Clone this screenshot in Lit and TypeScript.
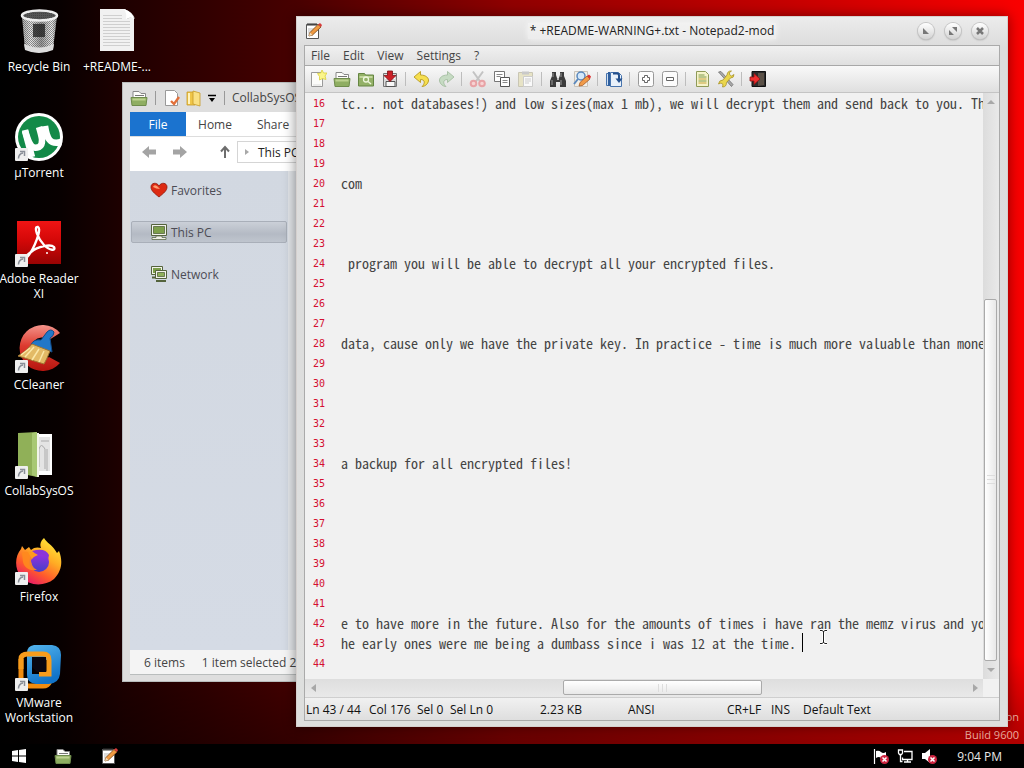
import { LitElement, html, css, svg, TemplateResult } from "lit";
import { customElement, property } from "lit/decorators.js";

type Art = TemplateResult;
const icon = (size: number, box: number, body: unknown): Art =>
  html`<svg width=${size} height=${size} viewBox="0 0 ${box} ${box}" aria-hidden="true">${body}</svg>`;

/* ---------- desktop artwork (48 unit grid) ---------- */
const bin = icon(48, 48, svg`
  <defs>
    <linearGradient id="bg"><stop offset="0" stop-color="#aaa"/><stop offset=".25" stop-color="#e8e8e8"/><stop offset=".55" stop-color="#999"/><stop offset=".85" stop-color="#eee"/><stop offset="1" stop-color="#999"/></linearGradient>
    <pattern id="mesh" width="2" height="2" patternUnits="userSpaceOnUse"><rect width="1" height="1" fill="#444"/><rect x="1" y="1" width="1" height="1" fill="#555"/></pattern>
  </defs>
  <path d="M7 9 L10 42 Q24 49 38 42 L42 9Z" fill="url(#bg)"/>
  <path d="M7 9 L10 42 Q24 49 38 42 L42 9Z" fill="url(#mesh)" opacity=".6"/>
  <rect x="18" y="17" width="12" height="13" fill="#1c1c1c" opacity=".75"/>
  <path d="M9 37 Q24 44 39 37 L38 43 Q24 49 10 43Z" fill="#ddd"/>
  <ellipse cx="24.500" cy="8.500" rx="17.500" ry="5" fill="#555" stroke="#eee" stroke-width="2.500"/>
  <ellipse cx="24.500" cy="8.500" rx="15" ry="3.500" fill="url(#mesh)"/>`);
const paper = icon(48, 48, svg`
  <path d="M7 2 h25 l9 9 v33 h-34z" fill="#f1f1f1"/>
  <path d="M31 2 q5 3 3 10 q5 -3 8 0 q-2 -7 -11 -10z" fill="#bbb"/>
  <path d="M31 2 q3 4 2 10 q5 -3 8 0 q-1 -7 -10 -10z" fill="#fff"/>
  ${[8, 11, 14, 17, 20, 23, 26, 29, 32, 35, 38].map(y => svg`<path d="M10 ${y + .5} H${y < 13 ? 29 : 37}" stroke="#cfcfcf"/>`)}`);
const torrent = icon(50, 50, svg`
  <circle cx="25" cy="25" r="24" fill="#fff"/><circle cx="25" cy="25" r="21" fill="#138a48"/>
  <path d="M11 19 L18 45" stroke="#fff" stroke-width="6.500"/>
  <path d="M11 18 C15 33 18 38 25 35 C30 32 28 25 25 15 M31 14 C33 27 36 33 47 30" stroke="#fff" stroke-width="6.500" fill="none"/>`);
const adobe = icon(46, 46, svg`
  <defs><linearGradient id="ad" x2="0" y2="1"><stop offset="0" stop-color="#f01414"/><stop offset=".45" stop-color="#d40808"/><stop offset="1" stop-color="#980303"/></linearGradient></defs>
  <rect x="1" y="1" width="44" height="43" fill="url(#ad)"/>
  <path d="M22 7 C17 6 22 19 28 25 C34 31 40 31 38 27 C35 24 22 26 15 32 C7 38 9 40 12 36 C18 29 26 9 22 7Z" fill="none" stroke="#fff" stroke-width="2.400"/>
  <circle cx="31" cy="33" r="1" fill="#fff"/>`);
const ccleaner = icon(48, 48, svg`
  <defs><linearGradient id="cc" x2="0" y2="1"><stop offset="0" stop-color="#f4938a"/><stop offset=".45" stop-color="#dd3b2f"/><stop offset="1" stop-color="#b5150f"/></linearGradient></defs>
  <path d="M45 8 A23 23 0 1 0 45 38 L34 32 A11 11 0 1 1 34 15Z" fill="url(#cc)"/>
  <path d="M32 7 Q36 3 39 7 Q39 11 35 13 L37 27 L16 20 Q18 14 26 15Z" fill="#2277c8" stroke="#124b87"/>
  <path d="M17 19 L35 26 Q32 34 29 39 L3 31 Q12 26 17 19Z" fill="#e3ba66" stroke="#9e7431"/>
  <path d="M19 22 L10 32 M24 24 L17 35 M29 26 L24 37 M15 23 L6 30" stroke="#fbe7a8" stroke-width="1.500"/>`);
const folderDoc = icon(48, 48, svg`
  <path d="M20 3 H37 V44 H20Z" fill="#fff"/><path d="M23 6h12v34h-12z" fill="#e4e4e4"/>
  <path d="M24 36 V18 q2 -7 6 0 v20 M26 10h8M32 18v22" stroke="#aaa" fill="none"/>
  <path d="M3 2 L22 1 V46 L3 42Z" fill="#90b058"/><path d="M17 2 l5 -1 v45 l-5 -2z" fill="#a8c873"/>
  <path d="M22 2 h2 v44 h-2z" fill="#f2f5e9"/>`);
const firefox = icon(48, 48, svg`
  <defs><linearGradient id="ff" x1=".85" y1="0" x2=".25" y2="1"><stop offset="0" stop-color="#fff03c"/><stop offset=".4" stop-color="#ffab24"/><stop offset=".7" stop-color="#ff5a2c"/><stop offset="1" stop-color="#e5146c"/></linearGradient>
  <linearGradient id="fp" x2="0" y2="1"><stop offset="0" stop-color="#9a2fe0"/><stop offset="1" stop-color="#4a3fc8"/></linearGradient></defs>
  <path d="M29 1 C32 6 37 8 40 13 L42 16 L44 14 C48 24 47 34 39 42 C29 50 14 49 6 40 C-1 31 0 19 6 12 L7 9 L10 13 L14 10 L16 13 C19 10 23 10 26 11 C24 6 27 3 29 1Z" fill="url(#ff)"/>
  <circle cx="24" cy="25" r="10" fill="url(#fp)"/>
  <path d="M7 16 C12 13 16 16 23 17 C23 20 18 21 16 23 C16 28 22 30 27 29 C22 36 10 34 8 25Z" fill="#ff8a1e" opacity=".9"/>
  <circle cx="25" cy="25" r="8.500" fill="url(#fp)"/>
  <path d="M17 14 Q30 10 34 18 L33 23 Q30 16 22 18Z" fill="#8a35d8"/>
  <path d="M13 15 Q19 15 23 18 Q18 20 17 22Z" fill="#ff9a1e"/>`);
const vmware = icon(48, 48, svg`
  <defs><linearGradient id="vb" x2=".4" y2="1"><stop offset="0" stop-color="#55b6ee"/><stop offset="1" stop-color="#1173c8"/></linearGradient></defs>
  <path d="M6 16 V36 Q6 43 14 43 H28 Q33 43 35 38" fill="none" stroke="#f08c10" stroke-width="5"/>
  <path d="M19 2 H37 Q46 3 46 12 L45 31 Q44 40 34 41 H21 Q12 40 12 32 V10 Q12 3 19 2Z M17 17 V31 H32 V17Z" fill="url(#vb)" fill-rule="evenodd"/>
  <path d="M6 26 V16 Q6 11 13 11 H28 Q34 11 34 17 V31 H24" fill="none" stroke="#f79c1c" stroke-width="5"/>
  <path d="M17 14h14v15h-9l-5-5z" fill="#0a0710"/>`);

/* ---------- 16 unit glyphs ---------- */
const openFolder = icon(18, 18, svg`
  <path d="M3 9 V2.500 H9 L11 4.500 H15.500 V9Z" fill="#fdfdfa" stroke="#888"/>
  <path d="M5 6.500 h9" stroke="#777"/>
  <path d="M1 8.500 H17 L16 16.500 H2Z" fill="#8fae62" stroke="#6f8c4c"/><path d="M2.500 9.500h13v2h-13z" fill="#bcd28f"/>`);
const browse = icon(18, 18, svg`
  <path d="M1.500 3.500 h6 l1 1.500 h8 v11 h-15z" fill="#93b167" stroke="#658542"/><path d="M2.500 6h13v2h-13z" fill="#c3d79c"/>
  <circle cx="9" cy="9.500" r="2.500" fill="none" stroke="#eef6dc" stroke-width="1.300"/><path d="M11 11.500l3 2.500" stroke="#eef6dc" stroke-width="1.500"/>`);
const pad = icon(18, 18, svg`
  <path d="M2.500 2.500 h12 v14 h-12z" fill="#fff" stroke="#555"/><path d="M4 1v3M6 1v3M8 1v3M10 1v3M12 1v3" stroke="#333" stroke-width="1"/>
  <path d="M4 7h8M4 9h7M4 11h6M4 13h5" stroke="#aaa" stroke-width=".8"/>
  <path d="M5 14 L6 10.500 L14 2.500 L17 5 L8.500 13Z" fill="#f09a42" stroke="#87531f" stroke-width=".9"/><path d="M14 2.500 l3 2.500 1-2 -2-2z" fill="#d83a3a"/><path d="M5 14 L6 10.500 L8.500 13Z" fill="#f4dcb8"/>`);
const newFile = icon(18, 18, svg`
  <path d="M2.500 2.500 h11 v14 h-11z" fill="#fcfcfa" stroke="#9a9a9a"/><path d="M4 15h8" stroke="#ddd"/>
  <path d="M13 0 l1.500 3 3.500 0 -2 3 1 3.500 -3.500 -1 -3 1.500 0 -3.500 -2 -3 3.300 -.5z" fill="#fbf58b" stroke="#d9cf3a" stroke-width=".8"/>`);
const save = icon(18, 18, svg`
  <path d="M2.500 3.500 h13 v13 h-13z" fill="#dcdcdc" stroke="#777"/><path d="M5 11.500h9v5h-9z" fill="#f8f8f8" stroke="#555"/><path d="M4 5h2v4h-2zM12 5h2v4h-2z" fill="#fff"/>
  <path d="M6.500 1 h5 v4.500 h3.500 l-6 6 -6 -6 h3.500z" fill="#cc2027" stroke="#7e1015" stroke-width=".8"/>`);
const undo = icon(18, 18, svg`
  <path d="M1 7 L7.500 1.500 V5 C13 5 16 8 15.500 11 C15 14 12 16.500 9 16.500 C12 14 12.500 9.500 7.500 9.500 V12.500Z" fill="#f6df4f" stroke="#b79a24" stroke-width=".9"/>`);
const redo = icon(18, 18, svg`
  <path d="M17 7 L10.500 1.500 V5 C5 5 2 8 2.500 11 C3 14 6 16.500 9 16.500 C6 14 5.500 9.500 10.500 9.500 V12.500Z" fill="#c6dbc3" stroke="#a5bda2" stroke-width=".9"/>`);
const cut = icon(18, 18, svg`
  <path d="M4 1.500 L11.500 12 M14 1.500 L6.500 12" stroke="#c3c3c3" stroke-width="2"/>
  <circle cx="4.500" cy="13.500" r="2.800" fill="#f7d3d3" stroke="#e8a3a6" stroke-width="2"/><circle cx="13" cy="13.500" r="2.800" fill="#f7d3d3" stroke="#e8a3a6" stroke-width="2"/>`);
const copy = icon(18, 18, svg`
  <path d="M1.500 1.500 h10 v10 h-10z" fill="#fff" stroke="#777"/><path d="M3.500 4.500h6M3.500 6.500h4" stroke="#888"/>
  <path d="M7.500 7.500 h9 v9 h-9z" fill="#fff" stroke="#555"/><path d="M9.500 10.500h5M9.500 12.500h5" stroke="#888"/>`);
const paste = icon(18, 18, svg`
  <path d="M1.500 2.500 h14 v14 h-14z" fill="#e7e3c6" stroke="#c9c6b4"/><path d="M5 1.500h7v3h-7z" fill="#c9c9c9"/><path d="M6.500 6.500h9v10h-9z" fill="#fafafa" stroke="#ccc"/><path d="M8 9h6M8 11h6M8 13h4" stroke="#ccc"/>`);
const find = icon(18, 18, svg`
  <path d="M3 2h4v3l1 3h2l1-3v-3h4v4l2 5v6h-6v-5h-4v5h-6v-6l2-5z" fill="#3c3c3c"/><path d="M4 3v4M12 3v4M3 10v5M12 10v5" stroke="#999"/><path d="M8 8h2v2h-2z" fill="#bbb"/>`);
const replace = icon(18, 18, svg`
  <path d="M1.500 1.500h13v15h-13z" fill="#f1efe9" stroke="#c9c2b8"/><circle cx="8" cy="6" r="4" fill="#d4e8fa" stroke="#5a88bd" stroke-width="1.500"/><path d="M5 9 l-4 5" stroke="#5a88bd" stroke-width="2"/>
  <path d="M6 16 l1-3.500 7-6.500 3 3 -7.500 6.500z" fill="#f19a48" stroke="#a55c28" stroke-width=".8"/><path d="M14 6l2-1.500 2 2-1 2.500z" fill="#d33"/>`);
const wrap = icon(18, 18, svg`
  <path d="M1.500 3.500h4v12h-4z" fill="#cfe0f3" stroke="#4673ad"/><path d="M5.500 2.500h8l3 3v11h-11z" fill="#e9f1fa" stroke="#4673ad"/>
  <path d="M4 2v14" stroke="#2f5f9e" stroke-width="2"/><path d="M8 3.500h4q2 0 2 2v4" stroke="#234f8c" stroke-width="2" fill="none"/><path d="M10.500 8.500h7l-3.500 4.500z" fill="#234f8c"/>`);
const zoomBox = (plus: boolean) => icon(18, 18, svg`
  <rect x="1.500" y="1.500" width="15" height="15" rx="2" fill="#fcfcfc" stroke="#999"/>
  ${plus ? svg`<path d="M7.500 5.500h3v2h2v3h-2v2h-3v-2h-2v-3h2z" fill="#fff" stroke="#666"/>` : svg`<path d="M5.500 7.500h7v3h-7z" fill="#fff" stroke="#666"/>`}`);
const scheme = icon(18, 18, svg`
  <path d="M3.500 1.500h9l3 3v12h-12z" fill="#f5f3c9" stroke="#8f9a58"/><path d="M5.500 5h6M5.500 7h8M5.500 11h8" stroke="#7f9a4c"/><path d="M5.500 9h8M5.500 13h8" stroke="#c8a23c"/>`);
const tools = icon(18, 18, svg`
  <path d="M1.500 2 L4 1.500 L16 14.500 L14.500 16.500 Z" fill="#a9a9a9" stroke="#666" stroke-width=".7"/>
  <path d="M17 4.500 l-2.500 1.500 -2 -1.500 0 -2 2 -1.500 q-4 -.5 -4.500 4 l-4 5 q-4 0 -4.500 4 l2.500 -1 2 1.500 -.5 2.500 q4 0 4 -4.500 l4 -4.500 q3.500 0 3.500 -3.500z" fill="#ead64c" stroke="#a08a1f" stroke-width=".7"/>`);
const exit = icon(18, 18, svg`
  <path d="M3 1.500h13.500v15h-13.500z" fill="#2c2c2c" stroke="#111"/><path d="M9 3h6v12l-6 1z" fill="#5b5147"/>
  <path d="M1 7h4v-3.500l6 5.500-6 5.500v-3.500h-4z" fill="#ee2f2f" stroke="#8b1010" stroke-width=".8"/>`);
const pageCheck = icon(18, 18, svg`
  <path d="M2.500 1.500h9l3 3v12h-12z" fill="#fff" stroke="#999"/><path d="M8 12 l3 3 5-7" stroke="#e2703a" stroke-width="2.400" fill="none"/>`);
const yellowFolder = icon(18, 18, svg`
  <path d="M2 3h8v13h-8z" fill="#f0c649" stroke="#c79a26" stroke-width=".8"/><path d="M8 2l7 2v13l-7-2z" fill="#fae083" stroke="#c79a26" stroke-width=".8"/><path d="M4 4v11" stroke="#fff3bd" stroke-width="2"/>`);
const heart = icon(18, 18, svg`
  <path d="M9 16 C4 12 1 9.500 1 6 C1 1.500 7 1 9 5 C11 1 17 1.500 17 6 C17 9.500 14 12 9 16Z" fill="#dd2a12" stroke="#8d1508" stroke-width=".8"/><path d="M3 6 Q4 3 7 5 L10 8 Q6 8 3 6Z" fill="#ff9c70"/>`);
const pc = icon(18, 18, svg`
  <path d="M1.500 1.500h15v11h-15z" fill="#f2f2ea" stroke="#54633c"/><path d="M3.500 3.500h11v7h-11z" fill="#7d9f4a" stroke="#54633c" stroke-width=".8"/>
  <path d="M6 13h6v1.500h4v2h-14v-2h4z" fill="#f0f0e8" stroke="#5d6b49" stroke-width=".8"/>`);
const network = icon(18, 18, svg`
  <path d="M1.500 1.500h11v8h-11z" fill="#f2f2ea" stroke="#54633c"/><path d="M3 3h8v5h-8z" fill="#7d9f4a"/><path d="M2 12.500h5" stroke="#54633c" stroke-width="2"/>
  <path d="M5.500 5.500h11v8h-11z" fill="#f2f2ea" stroke="#54633c"/><path d="M7.500 7.500h7v4h-7z" fill="#8fb05a" stroke="#54633c" stroke-width=".8"/><path d="M6 16h10" stroke="#54633c" stroke-width="2"/>`);
const navArrow = (right: boolean) => icon(16, 16, right
  ? svg`<path d="M1 5.500h7v-3.500l7 6-7 6v-3.500h-7z" fill="#a4a4a4"/>`
  : svg`<path d="M15 5.500h-7v-3.500l-7 6 7 6v-3.500h7z" fill="#a4a4a4"/>`);
const upArrow = icon(14, 14, svg`<path d="M7 13V3M3 6.500L7 2l4 4.500" fill="none" stroke="#6d6d6d" stroke-width="2"/>`);
const windows = icon(14, 14, svg`<path d="M0 2l6-1v5.500h-6zM7 1l7-1v6.500h-7zM0 7.500h6v5.500l-6-1zM7 7.500h7v6.500l-7-1z" fill="#fff"/>`);
const badX = svg`<circle cx="11.500" cy="11.500" r="4.500" fill="#cf2440"/><path d="M9.500 9.500l4 4m0-4l-4 4" stroke="#fff" stroke-width="1.500"/>`;
const flag = icon(16, 16, svg`<path d="M1.500 1v15" stroke="#fff" stroke-width="1.200"/><path d="M3 3q3-1 5 1t5 0v7q-3 1-5-1t-5 0z" fill="#fff"/>${badX}`);
const lan = icon(16, 16, svg`<path d="M7 3.500h8v8h-9.500v-2" fill="none" stroke="#fff" stroke-width="1.300"/><path d="M7 14h7M10.500 12v2M3.500 6v7.500h2" stroke="#fff" stroke-width="1.300" fill="none"/><path d="M1.500 2h4v3l-1 1.500h-2l-1-1.500z" fill="none" stroke="#fff" stroke-width="1.300"/>`);
const speaker = icon(16, 16, svg`<path d="M1 5h3l5-4v14l-5-4h-3z" fill="#fff"/>${badX}`);
const shortcut = icon(13, 13, svg`<rect width="13" height="13" rx="1" fill="#efefef"/><path d="M3.500 10.500Q3.500 6 8 5M5 3.500h4.500v4.500" fill="none" stroke="#8a8f98" stroke-width="1.500"/>`);
const tri = (d: string) => html`<svg width="8" height="8" viewBox="0 0 8 8" aria-hidden="true"><path d=${d} fill="#a8a8a8"/></svg>`;

@customElement("desktop-item")
class DesktopItem extends LitElement {
  @property() label = "";
  @property({ attribute: false }) art: Art | null = null;
  @property({ type: Boolean }) link = false;
  static styles = css`
    :host { display: block; }
    button { all: unset; box-sizing: border-box; display: flex; flex-direction: column; align-items: center; width: 100%; }
    .art { position: relative; display: flex; align-items: center; justify-content: center; width: 50px; height: 50px; }
    .badge { position: absolute; left: 1px; bottom: 1px; display: flex; }
    .text { margin: 3px -4px 0; font-size: 12px; line-height: 15px; text-align: center; color: #fff; text-shadow: 0 1px 2px #000; }
  `;
  render() {
    return html`<button><span class="art">${this.art}${this.link ? html`<span class="badge">${shortcut}</span>` : ""}</span><span class="text">${this.label}</span></button>`;
  }
}

@customElement("file-window")
class FileWindow extends LitElement {
  static styles = css`
    :host { display: flex; flex-direction: column; box-sizing: border-box; padding: 0 7px 6px; background: #dedede; border: 1px solid #b9bdbd; font-size: 12px; color: #444; }
    button { all: unset; display: flex; }
    .title { display: flex; align-items: center; height: 29px; gap: 4px; }
    .bar { width: 1px; height: 14px; margin: 0 3px; background: #999; }
    .tabs { display: flex; height: 24px; background: #fff; border-bottom: 1px solid #ddd; }
    .tabs button { justify-content: center; align-items: center; width: 58px; white-space: nowrap; }
    .tabs .file { background: #1b73cf; color: #fff; width: 56px; }
    .nav { display: flex; align-items: center; height: 30px; padding: 0 0 4px 11px; background: #fff; }
    .nav button { margin-right: 15px; }
    .nav .up { margin: 0 5px 0 15px; }
    .path { display: flex; align-items: center; flex: 1; height: 20px; gap: 7px; padding-left: 5px; border: 1px solid #d5d5d5; white-space: nowrap; color: #222; }
    .body { display: flex; flex: 1; background: #e3e6ea; min-height: 0; }
    .tree { width: 158px; padding-top: 8px; background: linear-gradient(#d2d8e1, #d5dbe5); display: flex; flex-direction: column; gap: 20px; }
    .tree button { align-items: center; gap: 3px; height: 20px; padding-left: 18px; margin: 0 1px; border: 1px solid transparent; color: #4c4c55; }
    .tree .on { border-color: #a9afb9; border-radius: 2px; background: linear-gradient(#cbd0d8, #b4bac4 60%, #bfc5ce); }
    .status { display: flex; align-items: center; gap: 17px; height: 24px; padding-left: 14px; background: #f4f4f4; border-bottom: 1px solid #b9bdbd; white-space: nowrap; }
    .pair { display: flex; gap: 3px; }
  `;
  render() {
    return html`
      <div class="title">${openFolder}<i class="bar"></i>${pageCheck}${yellowFolder}
        ${icon(10, 10, svg`<path d="M1 2.500h8" stroke="#000" stroke-width="1.500"/><path d="M2 5h6l-3 4z"/>`)}
        <i class="bar"></i><span>CollabSysOS</span></div>
      <div class="tabs"><button class="file">File</button><button>Home</button><button>Share</button></div>
      <div class="nav"><button aria-label="Back">${navArrow(false)}</button><button aria-label="Forward">${navArrow(true)}</button>
        <button class="up" aria-label="Up">${upArrow}</button>
        <div class="path">${tri("M2 1l4 3-4 3z")}<span>This PC</span></div></div>
      <div class="body"><div class="tree">
        <button>${heart}Favorites</button><button class="on">${pc}This PC</button><button>${network}Network</button></div></div>
      <div class="status"><span>6 items</span><span class="pair"><span>1 item selected</span><span>2.</span></span></div>`;
  }
}

const TOOLS: [string, Art][][] = [
  [["New", newFile], ["Open", openFolder], ["Browse", browse], ["Save", save]],
  [["Undo", undo], ["Redo", redo]],
  [["Cut", cut], ["Copy", copy], ["Paste", paste]],
  [["Find", find], ["Replace", replace]],
  [["Word wrap", wrap]],
  [["Zoom in", zoomBox(true)], ["Zoom out", zoomBox(false)]],
  [["Scheme", scheme], ["Customize", tools]],
  [["Exit", exit]],
];
const TEXT: Record<number, string> = {
  16: "tc... not databases!) and low sizes(max 1 mb), we will decrypt them and send back to you. Th",
  20: "com",
  24: " program you will be able to decrypt all your encrypted files.",
  28: "data, cause only we have the private key. In practice - time is much more valuable than money",
  34: "a backup for all encrypted files!",
  42: "e to have more in the future. Also for the amounts of times i have ran the memz virus and you",
  43: "he early ones were me being a dumbass since i was 12 at the time. ",
};
const LINES = Array.from({ length: 29 }, (_, i) => i + 16);

@customElement("note-window")
class NoteWindow extends LitElement {
  static styles = css`
    :host { display: flex; flex-direction: column; box-sizing: border-box; padding: 0 7px 5px; background: linear-gradient(#ececec, #dcdcdc 30px, #dedfde); border: 1px solid #d5d0ce; box-shadow: 0 0 12px rgba(0, 0, 0, 0.45); font-size: 12px; color: #444; }
    button { all: unset; display: flex; align-items: center; justify-content: center; }
    .title { display: grid; grid-template-columns: 1fr auto 1fr; align-items: center; height: 28px; }
    .name { color: #222; padding: 0 2px; background: rgba(255, 255, 255, 0.4); box-shadow: 0 0 6px rgba(255, 255, 255, 0.7); line-height: 16px; }
    .ctl { display: flex; justify-content: flex-end; gap: 11px; padding-right: 12px; }
    .ctl button { width: 16px; height: 16px; border-radius: 50%; background: linear-gradient(#fff, #d3d3d3); box-shadow: 0 0 0 1px #c4c4c4, 0 1px 2px #999; }
    .frame { display: flex; flex-direction: column; flex: 1; min-height: 0; border: 1px solid #aaa; }
    .menu { display: flex; align-items: center; gap: 13px; height: 19px; padding: 0 6px; background: linear-gradient(#f0f0f0, #e0e0e0); border-bottom: 1px solid #a8a8a8; }
    .tools { display: flex; align-items: center; height: 26px; padding-left: 1px; background: linear-gradient(#f9f9f9, #dfdfdf); border-bottom: 1px solid #c4c4c4; }
    .group { display: flex; }
    .group + .group::before { content: ""; width: 1px; height: 14px; margin: 5px 4px 0 3px; background: #bdbdbd; }
    .group button { width: 24px; height: 24px; }
    .edit { display: grid; grid-template-columns: 1fr 16px; grid-template-rows: 1fr 18px; flex: 1; min-height: 0; background: #f1f1f1; }
    .page { position: relative; display: flex; min-width: 0; min-height: 0; overflow: hidden; }
    .nums { width: 20px; padding: 1px 16px 0 0; text-align: right; font: 10px/20px "DejaVu Sans Mono", "Liberation Mono", monospace; color: #d40f30; }
    .nums div { height: 20px; }
    textarea { flex: 1; min-width: 0; margin: 0; padding: 0; border: 0; outline: 0; resize: none; overflow: hidden; background: none; color: #444; font: 14px/20px "Noto Sans Mono CJK SC", "Noto Sans Mono CJK JP", "Liberation Mono", monospace; }
    .caret { position: absolute; left: 497px; top: 540px; width: 1px; height: 19px; background: #000; }
    .beam { position: absolute; left: 514px; top: 536px; }
    .v { display: flex; flex-direction: column; background: linear-gradient(90deg, #dcdcdc, #e9e9e9); }
    .h { display: flex; background: linear-gradient(#dedede, #e9e9e9); }
    .v button { height: 18px; } .h button { width: 17px; }
    .thumb { display: flex; align-items: center; justify-content: center; gap: 3px; box-sizing: border-box; border: 1px solid #aaa; border-radius: 2px; background: linear-gradient(#fff, #e8e8e8); }
    .v .thumb { flex: 362; margin: 0 2px 0 1px; flex-direction: column; background: linear-gradient(90deg, #fff, #e8e8e8); }
    .h .thumb { flex: 199; margin: 1px 0 2px; }
    .thumb i { width: 1px; height: 8px; background: #ddd; } .v .thumb i { width: 8px; height: 1px; }
    .v .gap { flex: 189; } .h .left { flex: 242; } .h .right { flex: 205; }
    .status { display: grid; grid-template-columns: 63px 48px 33px 90px 88px 99px 44px 32px 1fr; align-items: center; height: 22px; padding-left: 1px; border-top: 1px solid #cfcfcf; background: linear-gradient(#f1f1f1, #dedede); color: #111; white-space: nowrap; }
  `;
  render() {
    return html`
      <div class="title">${pad}<span class="name">* +README-WARNING+.txt - Notepad2-mod</span>
        <div class="ctl">
          <button aria-label="Minimize">${icon(8, 8, svg`<path d="M1 1v6h6z" fill="#777"/>`)}</button>
          <button aria-label="Maximize">${icon(8, 8, svg`<path d="M3 0h5v5zM0 3v5h5z" fill="#777"/>`)}</button>
          <button aria-label="Close">${icon(8, 8, svg`<path d="M1 1l6 6M7 1l-6 6" stroke="#777" stroke-width="2.500"/>`)}</button>
        </div></div>
      <div class="frame">
        <div class="menu">${["File", "Edit", "View", "Settings", "?"].map(m => html`<button>${m}</button>`)}</div>
        <div class="tools">${TOOLS.map(g => html`<div class="group">${g.map(([n, a]) => html`<button aria-label=${n}>${a}</button>`)}</div>`)}</div>
        <div class="edit">
          <div class="page">
            <div class="nums">${LINES.map(n => html`<div>${n}</div>`)}</div>
            <textarea wrap="off" spellcheck="false" aria-label="Document text" .value=${LINES.map(n => TEXT[n] ?? "").join("\n")}></textarea>
            <i class="caret"></i>
            <svg class="beam" width="9" height="16" viewBox="0 0 9 16"><path d="M1 1.500h2l1.500 1 1.500-1h2M4.500 2v12M1 14.500h2l1.500-1 1.500 1h2" fill="none" stroke="#fff" stroke-width="3"/><path d="M1 1.500h2l1.500 1 1.500-1h2M4.500 2v12M1 14.500h2l1.500-1 1.500 1h2" fill="none" stroke="#222"/></svg>
          </div>
          <div class="v"><button aria-label="Scroll up">${tri("M0 6l4-4 4 4z")}</button><span class="gap"></span><span class="thumb"><i></i><i></i><i></i></span><button aria-label="Scroll down">${tri("M0 2l4 4 4-4z")}</button></div>
          <div class="h"><button aria-label="Scroll left">${tri("M6 0L1 4l5 4z")}</button><span class="left"></span><span class="thumb"><i></i><i></i><i></i></span><span class="right"></span><button aria-label="Scroll right">${tri("M2 0l5 4-5 4z")}</button></div>
        </div>
        <div class="status">${["Ln 43 / 44", "Col 176", "Sel 0", "Sel Ln 0", "2.23 KB", "ANSI", "CR+LF", "INS", "Default Text"].map(s => html`<span>${s}</span>`)}</div>
      </div>`;
  }
}

@customElement("app-root")
class AppRoot extends LitElement {
  static styles = css`
    :host { display: flex; flex-direction: column; height: 100vh; overflow: hidden; font-family: "Open Sans", "Noto Sans", sans-serif; font-size: 12px; background: #000; }
    .desk { position: relative; flex: 1; min-height: 0; background: linear-gradient(transparent 88%, rgba(0, 0, 0, 0.3)), linear-gradient(90deg, #000 0, #080000 6%, #1e0000 12%, #480000 29%, #900000 50%, #c40000 76%, #fa0000 100%); }
    .icons { display: grid; grid-auto-flow: column; grid-template-rows: repeat(7, 106px); grid-auto-columns: 78px; width: max-content; padding-top: 6px; }
    .explorer { position: absolute; left: 122px; top: 82px; bottom: 62px; right: 202px; }
    .note { position: absolute; left: 296px; top: 16px; right: 16px; bottom: 17px; }
    .mark { position: absolute; right: 5px; bottom: 0; text-align: right; font-size: 11px; line-height: 18px; color: #f0b0a0; }
    .task { display: flex; align-items: center; height: 24px; padding: 0 22px 0 12px; background: #000; color: #e8e8e8; }
    button { all: unset; display: flex; }
    .apps { display: flex; align-items: center; flex: 1; gap: 28px; }
    .tray { display: flex; align-items: center; gap: 8px; margin-right: 20px; }
  `;
  render() {
    const items: [string, Art, boolean][] = [
      ["Recycle Bin", bin, false], ["µTorrent", torrent, true], ["Adobe Reader XI", adobe, true], ["CCleaner", ccleaner, true],
      ["CollabSysOS", folderDoc, true], ["Firefox", firefox, true], ["VMware Workstation", vmware, true], ["+README-...", paper, false],
    ];
    return html`
      <div class="desk">
        <div class="icons">${items.map(([l, a, s]) => html`<desktop-item .label=${l} .art=${a} .link=${s}></desktop-item>`)}</div>
        <div class="mark"><div>on</div><div>Build 9600</div></div>
        <file-window class="explorer"></file-window>
        <note-window class="note"></note-window>
      </div>
      <div class="task">
        <div class="apps"><button aria-label="Start">${windows}</button><button aria-label="File Explorer">${openFolder}</button><button aria-label="Notepad2">${pad}</button></div>
        <div class="tray">${flag}${lan}${speaker}</div><span>9:04 PM</span>
      </div>`;
  }
}
